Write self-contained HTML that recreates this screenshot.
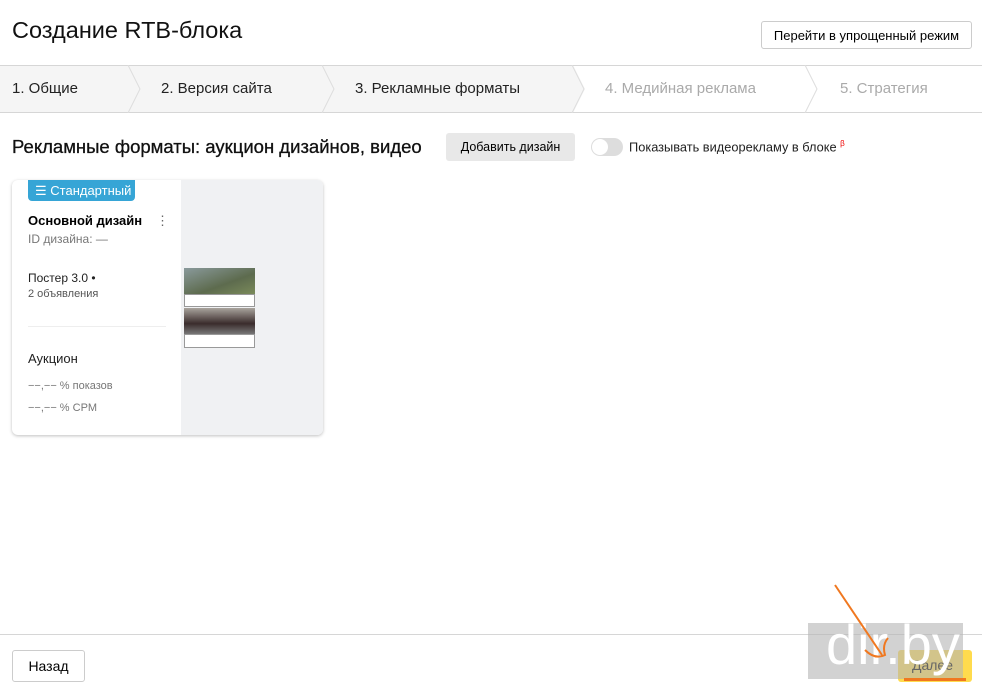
<!DOCTYPE html>
<html><head><meta charset="utf-8"><style>
*{box-sizing:border-box;margin:0;padding:0}
body{width:982px;height:692px;background:#fff;font-family:"Liberation Sans","Noto Sans CJK SC",sans-serif;color:#000;position:relative;overflow:hidden}
.a{position:absolute;white-space:nowrap}
.btn{position:absolute;border:1px solid #ccc;border-radius:3px;background:#fff;font-size:13px;display:flex;align-items:center;justify-content:center}
</style></head><body>
<div class="a" style="left:12px;top:17px;font-size:23.5px;color:#111">Создание RTB-блока</div>
<div class="btn" style="left:761px;top:21px;width:211px;height:28px;">Перейти в упрощенный режим</div>

<svg class="a" style="left:0;top:65px" width="982" height="48">
<polygon points="0,0 573,0 585,24 573,48 0,48" fill="#f5f5f5"/>
<line x1="0" y1="0.5" x2="982" y2="0.5" stroke="#d6d6d6"/>
<line x1="0" y1="47.5" x2="982" y2="47.5" stroke="#d6d6d6"/>
<polyline points="128,0 140,24 128,48" fill="none" stroke="#ddd"/>
<polyline points="322,0 334,24 322,48" fill="none" stroke="#ddd"/>
<polyline points="572,0 584,24 572,48" fill="none" stroke="#ddd"/>
<polyline points="805,0 817,24 805,48" fill="none" stroke="#ddd"/>
</svg>
<div class="a" style="left:12px;top:80px;font-size:15px;color:#222">1. Общие</div>
<div class="a" style="left:161px;top:80px;font-size:15px;color:#222">2. Версия сайта</div>
<div class="a" style="left:355px;top:80px;font-size:15px;color:#222">3. Рекламные форматы</div>
<div class="a" style="left:605px;top:80px;font-size:15px;color:#aaa">4. Медийная реклама</div>
<div class="a" style="left:840px;top:80px;font-size:15px;color:#aaa">5. Стратегия</div>

<div class="a" style="left:12px;top:136px;font-size:18.5px;color:#111;-webkit-text-stroke:0.3px #111">Рекламные форматы: аукцион дизайнов, видео</div>
<div class="a" style="left:446px;top:133px;width:129px;height:28px;background:#e8e8e8;border-radius:3px;font-size:12.5px;display:flex;align-items:center;justify-content:center">Добавить дизайн</div>
<div class="a" style="left:591px;top:138px;width:32px;height:18px;border-radius:9px;background:#ddd"></div>
<div class="a" style="left:592px;top:139px;width:16px;height:16px;border-radius:8px;background:#fff"></div>
<div class="a" style="left:629px;top:139px;font-size:12.8px;color:#222">Показывать видеорекламу в блоке <sup style="color:#e00;font-size:8px">β</sup></div>

<div class="a" style="left:12px;top:180px;width:311px;height:255px;border-radius:6px;background:#fff;box-shadow:0 1px 3px rgba(0,0,0,.25);overflow:hidden">
<div class="a" style="left:169px;top:0;width:142px;height:255px;background:#f0f1f3"></div>
<div class="a" style="left:16px;top:0;width:107px;height:21px;background:#36a5d6;border-radius:0 0 4px 4px;color:#fff;font-size:13px;padding:3px 0 0 7px">☰ Стандартный</div>
<div class="a" style="left:16px;top:33px;font-size:13px;font-weight:bold">Основной дизайн</div>
<div class="a" style="left:144px;top:33px;font-size:13px;color:#666">⋮</div>
<div class="a" style="left:16px;top:52px;font-size:12px;color:#777">ID дизайна: —</div>
<div class="a" style="left:16px;top:91px;font-size:12px;color:#222">Постер 3.0 •</div>
<div class="a" style="left:16px;top:108px;font-size:11px;color:#555">2 объявления</div>
<div class="a" style="left:16px;top:146px;width:138px;height:1px;background:#eee"></div>
<div class="a" style="left:16px;top:171px;font-size:13px;color:#222">Аукцион</div>
<div class="a" style="left:16px;top:200px;font-size:11px;color:#777">−−,−− % показов</div>
<div class="a" style="left:16px;top:222px;font-size:11px;color:#777">−−,−− % CPM</div>
<div class="a" style="left:172px;top:88px;width:71px;height:39px;background:#ccc">
 <div style="height:26px;background:linear-gradient(160deg,#8a9a9c,#5d6b4e 60%,#7a8a5a)"></div>
 <div style="height:13px;background:#fff;border:1px solid #999"></div></div>
<div class="a" style="left:172px;top:128px;width:71px;height:40px;">
 <div style="height:26px;background:linear-gradient(180deg,#a9a49d,#3a2c2c 60%,#777)"></div>
 <div style="height:14px;background:#fff;border:1px solid #999"></div></div>
</div>

<div class="a" style="left:0;top:634px;width:982px;height:1px;background:#d6d6d6"></div>
<div class="btn" style="left:12px;top:650px;width:73px;height:32px;font-size:14px">Назад</div>
<div class="a" style="left:898px;top:650px;width:74px;height:32px;background:#ffdb4d;border-radius:3px"></div>
<div class="a" style="left:808px;top:623px;width:155px;height:56px;background:rgba(180,180,180,.6)"></div>
<div class="a" style="left:912px;top:657px;font-size:14px;color:#666">Далее</div>
<div class="a" style="left:826px;top:612px;font-size:56px;color:#fff;font-family:'Liberation Sans',sans-serif">dir.by</div>
<svg class="a" style="left:830px;top:580px" width="80" height="100"><path d="M5,5 L52,75 M35,70 Q45,80 55,75 Q52,65 58,58" fill="none" stroke="#f07820" stroke-width="2"/></svg>
<div class="a" style="left:904px;top:678px;width:62px;height:3px;background:#f07820"></div>
</body></html>
